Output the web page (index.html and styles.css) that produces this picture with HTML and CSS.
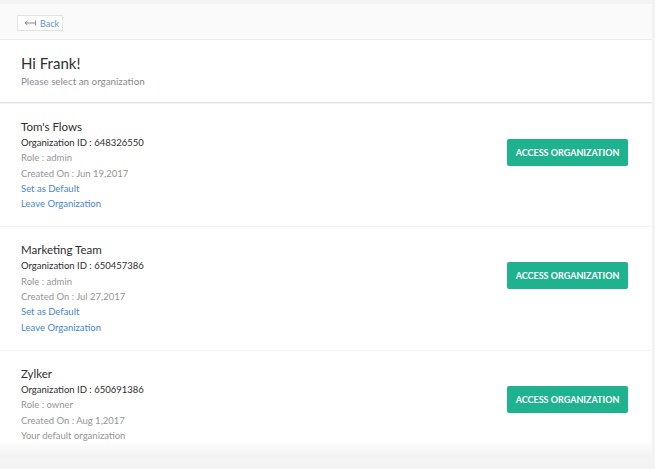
FILE: index.html
```html
<!DOCTYPE html>
<html lang="en">
<head>
    <meta charset="UTF-8">
    <meta name="viewport" content="width=device-width, initial-scale=1.0">
    <title>Select Organization</title>
    <link rel="stylesheet" href="styles.css">
</head>
<body>

    <div class="page">
        <!-- Top bar -->
        <div class="topbar">
            <a class="back-btn" href="#">
                <svg width="12" height="6" viewBox="0 0 12 6">
                    <path d="M11.5 0.5 V5.5 M11.5 3 H1 M1 3 L3.5 1 M1 3 L3.5 5" stroke="#8a8a8a" stroke-width="1" fill="none"/>
                </svg>
                Back
            </a>
        </div>

        <!-- Greeting -->
        <div class="greeting">
            <h2>Hi Frank!</h2>
            <p>Please select an organization</p>
        </div>

        <!-- Organizations -->
        <div class="org">
            <div class="org-info">
                <div class="org-name">Tom's Flows</div>
                <div class="org-id">Organization ID : 648326550</div>
                <div class="muted">Role : admin</div>
                <div class="muted">Created On : Jun 19,2017</div>
                <a class="link" href="#">Set as Default</a>
                <a class="link" href="#">Leave Organization</a>
            </div>
            <button class="btn">Access Organization</button>
        </div>

        <div class="org">
            <div class="org-info">
                <div class="org-name">Marketing Team</div>
                <div class="org-id">Organization ID : 650457386</div>
                <div class="muted">Role : admin</div>
                <div class="muted">Created On : Jul 27,2017</div>
                <a class="link" href="#">Set as Default</a>
                <a class="link" href="#">Leave Organization</a>
            </div>
            <button class="btn">Access Organization</button>
        </div>

        <div class="org last">
            <div class="org-info">
                <div class="org-name">Zylker</div>
                <div class="org-id">Organization ID : 650691386</div>
                <div class="muted">Role : owner</div>
                <div class="muted">Created On : Aug 1,2017</div>
                <div class="muted">Your default organization</div>
            </div>
            <button class="btn">Access Organization</button>
        </div>
    </div>

</body>
</html>
```

FILE: styles.css
```css
body {
    margin: 0;
    background: #f3f3f3;
    font-family: Lato, "Open Sans", Arial, sans-serif;
    color: #333;
}
.page {
    width: 652px;
    margin-top: 4px;
    background: white;
}
.topbar {
    display: flex;
    align-items: flex-start;
    height: 36px;
    background: #fafafa;
    border-bottom: 1px solid #ececec;
    padding: 11px 0 0 17px;
    box-sizing: border-box;
}
.back-btn {
    display: flex;
    align-items: center;
    gap: 4px;
    height: 16px;
    width: 46px;
    box-sizing: border-box;
    padding-left: 6px;
    background: white;
    border: 1px solid #e3e3e3;
    color: #5b8fd6;
    font-size: 9px;
    text-decoration: none;
}
.greeting {
    padding: 14px 21px 15px;
    border-bottom: 1px solid #e3e3e3;
}
.greeting h2 {
    margin: 0;
    font-size: 15px;
    font-weight: normal;
    line-height: 19px;
    color: #2e2e2e;
}
.greeting p {
    margin: 2px 0 0;
    font-size: 9.8px;
    line-height: 12px;
    color: #8a8a8a;
}
.org {
    display: flex;
    justify-content: space-between;
    align-items: flex-start;
    padding: 15px 24px 15px 21px;
    border-top: 1px solid #f4f4f4;
}
.org:first-of-type {
    border-top: none;
}
.org-info {
    display: flex;
    flex-direction: column;
    font-size: 9.5px;
    line-height: 15.3px;
}
.org-name {
    font-size: 11.5px;
    line-height: 16px;
    color: #2e2e2e;
}
.org-id {
    color: #2e2e2e;
}
.muted {
    color: #959595;
}
.link {
    color: #3f86d6;
    text-decoration: none;
}
.btn {
    margin-top: 20px;
    width: 121px;
    height: 27px;
    background: #1fb28e;
    color: white;
    border: none;
    border-radius: 2px;
    font-family: inherit;
    font-size: 9px;
    font-weight: bold;
    text-transform: uppercase;
    cursor: pointer;
}
.org.last {
    background: linear-gradient(to bottom, white 84%, #f1f1f1);
}
```
